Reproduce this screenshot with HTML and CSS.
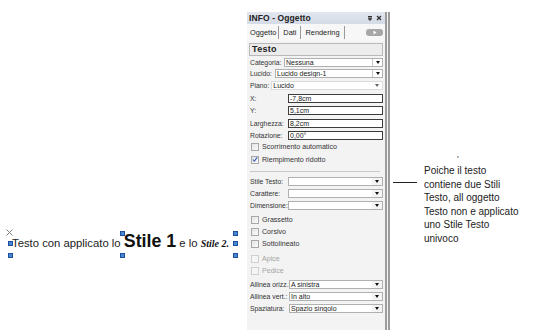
FILE: index.html
```html
<!DOCTYPE html>
<html>
<head>
<meta charset="utf-8">
<link rel="stylesheet" href="styles.css">
</head>
<body>
<div class="stage">
  <div class="left">
    <div class="sel">
      <span class="t-normal">Testo con applicato lo </span><span class="t-big">Stile 1</span><span class="t-normal"> e lo </span><span class="t-serif">Stile 2.</span>
      <svg class="xmark" width="7" height="7" viewBox="0 0 7 7"><path d="M0.5 0.5L6.5 6.5M6.5 0.5L0.5 6.5" stroke="#808080" stroke-width="1"/></svg>
      <span class="h h-lm"></span><span class="h h-lb"></span>
      <span class="h h-mt"></span><span class="h h-mb"></span>
      <span class="h h-rt"></span><span class="h h-rm"></span><span class="h h-rb"></span>
    </div>
  </div>

  <div class="panel">
    <div class="titlebar">
      <span class="title">INFO - Oggetto</span>
      <span class="tb-icons">
        <svg width="6" height="6" viewBox="0 0 6 6"><path d="M1 1.5h4M2 1.5v2.5h2V1.5M1 4h4M3 4v2" stroke="#333" stroke-width="1" fill="none"/></svg>
        <svg width="6" height="6" viewBox="0 0 6 6"><path d="M1 1L5 5M5 1L1 5" stroke="#333" stroke-width="1.3"/></svg>
      </span>
    </div>
    <div class="tabs">
      <span class="tab active">Oggetto</span>
      <span class="tab">Dati</span>
      <span class="tab">Rendering</span>
      <span class="tab-more"><svg width="4" height="5" viewBox="0 0 4 5"><path d="M0.5 0.5L3.5 2.5L0.5 4.5Z" fill="#fff"/></svg></span>
    </div>
    <div class="content">
      <div class="header">Testo</div>

      <div class="row mt2"><span class="lbl w-cat">Categoria:</span><span class="dd sep"><span class="val">Nessuna</span><span class="arr"></span></span></div>
      <div class="row mt2"><span class="lbl w-luc">Lucido:</span><span class="dd sep"><span class="val">Lucido design-1</span><span class="arr"></span></span></div>
      <div class="row mt3"><span class="lbl w-pia">Piano:</span><span class="dd flat"><span class="val">Lucido</span><span class="arr light"></span></span></div>

      <div class="row mt4"><span class="lbl w-38">X:</span><span class="inp">-7,8cm</span></div>
      <div class="row mt3"><span class="lbl w-38">Y:</span><span class="inp">5,1cm</span></div>
      <div class="row mt4"><span class="lbl w-38">Larghezza:</span><span class="inp">8,2cm</span></div>
      <div class="row mt3"><span class="lbl w-38">Rotazione:</span><span class="inp">0,00°</span></div>

      <div class="row mt2"><span class="cb"></span><span class="cblbl">Scorrimento automatico</span></div>
      <div class="row mt4"><span class="cb checked"><svg width="7" height="7" viewBox="0 0 7 7"><path d="M1 3.5L2.8 5.5L6 1" stroke="#3a5fb0" stroke-width="1.3" fill="none"/></svg></span><span class="cblbl">Riempimento ridotto</span></div>

      <div class="sepline"></div>

      <div class="row mt5"><span class="lbl w-38">Stile Testo:</span><span class="dd"><span class="val"></span><span class="arr"></span></span></div>
      <div class="row mt3"><span class="lbl w-38">Carattere:</span><span class="dd"><span class="val"></span><span class="arr"></span></span></div>
      <div class="row mt3"><span class="lbl w-38">Dimensione:</span><span class="dd"><span class="val"></span><span class="arr"></span></span></div>

      <div class="row mt5"><span class="cb"></span><span class="cblbl">Grassetto</span></div>
      <div class="row mt3"><span class="cb"></span><span class="cblbl">Corsivo</span></div>
      <div class="row mt3"><span class="cb"></span><span class="cblbl">Sottolineato</span></div>
      <div class="row mt6 disabled"><span class="cb"></span><span class="cblbl">Apice</span></div>
      <div class="row mt3 disabled"><span class="cb"></span><span class="cblbl">Pedice</span></div>

      <div class="row mt5"><span class="lbl w-39">Allinea orizz.:</span><span class="dd"><span class="val">A sinistra</span><span class="arr"></span></span></div>
      <div class="row mt3"><span class="lbl w-39">Allinea vert.:</span><span class="dd"><span class="val">In alto</span><span class="arr"></span></span></div>
      <div class="row mt3"><span class="lbl w-39">Spaziatura:</span><span class="dd"><span class="val">Spazio singolo</span><span class="arr"></span></span></div>
    </div>
  </div>

  <div class="anno">
    <div class="dot">'</div>
    <div class="anno-body">
      <div class="leader"></div>
      <div class="anno-text">Poiche il testo<br>contiene due Stili<br>Testo, all oggetto<br>Testo non e applicato<br>uno Stile Testo<br>univoco</div>
    </div>
  </div>
</div>
</body>
</html>
```

FILE: styles.css
```css
* { box-sizing: border-box; }
html, body { margin: 0; padding: 0; }
body {
  width: 537px;
  height: 330px;
  overflow: hidden;
  background: #fff;
  font-family: "Liberation Sans", Arial, sans-serif;
  color: #222;
}
.stage { display: flex; height: 330px; }

/* left text with selection handles */
.left { width: 247px; padding-top: 233px; padding-left: 12px; }
.sel { position: relative; display: inline-block; white-space: nowrap; line-height: 17px; }
.t-normal { font-size: 11.3px; color: #222; }
.t-big { font-size: 17.8px; font-weight: bold; color: #111; }
.t-serif { font-family: "Liberation Serif", "Times New Roman", serif; font-weight: bold; font-style: italic; font-size: 10px; color: #111; }
.xmark { position: absolute; left: -6px; top: -4px; display: block; }
.h { position: absolute; width: 5px; height: 5px; background: #4a86d6; border: 1px solid #1e4f9a; }
.h-lm { left: -4px; top: 8px; }
.h-lb { left: -4px; top: 20px; }
.h-mt { left: 108px; top: -2px; }
.h-mb { left: 108px; top: 20px; }
.h-rt { left: 221px; top: -2px; }
.h-rm { left: 221px; top: 8px; }
.h-rb { left: 221px; top: 20px; }

/* panel */
.panel {
  width: 143px;
  margin-top: 12px;
  background: #f3f3f3;
  border-right: 5px double #9c9c9c;
  display: flex;
  flex-direction: column;
}
.titlebar {
  height: 12px;
  background: linear-gradient(#e1e6ef, #d5dbe6);
  display: flex;
  align-items: center;
  justify-content: space-between;
  padding: 0 3px 0 2px;
}
.title { font-size: 8.5px; font-weight: bold; color: #222; letter-spacing: 0.1px; }
.tb-icons { display: flex; gap: 3px; align-items: center; }
.tb-icons svg { display: block; }

.tabs {
  height: 17px;
  display: flex;
  align-items: center;
  padding: 0 2px 0 2px;
  background: #f7f7f7;
}
.tab {
  font-size: 7.4px;
  color: #222;
  height: 13px;
  line-height: 13px;
  padding: 0 4px;
  border-right: 1px solid #9a9a9a;
}
.tab.active { padding-left: 1px; padding-right: 2px; }
.tab-more {
  margin-left: auto;
  width: 17px;
  height: 7px;
  border-radius: 3px;
  background: #a7a7a7;
  display: flex;
  align-items: center;
  justify-content: center;
}
.tab-more svg { display: block; }

.content { padding: 2px 2px 0 3px; display: flex; flex-direction: column; }
.header {
  height: 13px;
  margin-left: -1px;
  border: 1px solid #b9b9b9;
  background: #ececec;
  font-size: 9px;
  font-weight: bold;
  line-height: 11px;
  padding-left: 2px;
  letter-spacing: 0.3px;
  color: #222;
}

.row { display: flex; align-items: center; height: 9px; }
.mt2 { margin-top: 2px; }
.mt3 { margin-top: 3px; }
.mt4 { margin-top: 4px; }
.mt5 { margin-top: 5px; }
.mt6 { margin-top: 6px; }

.lbl { font-size: 6.8px; color: #333; white-space: nowrap; flex: none; }
.w-cat { width: 34px; }
.w-luc { width: 25px; }
.w-pia { width: auto; margin-right: 2px; }
.w-38 { width: 38px; }
.w-39 { width: 39px; }

.dd {
  flex: 1;
  height: 9px;
  border: 1px solid #b0b0b0;
  background: #fff;
  display: flex;
  align-items: stretch;
}
.dd.flat { border-color: #dcdcdc; }
.val { flex: 1; font-size: 7px; line-height: 7px; padding-left: 1px; color: #222; white-space: nowrap; overflow: hidden; }
.arr {
  width: 10px;
  flex: none;
  position: relative;
  background: #f4f4f4;
}
.dd.sep .arr { border-left: 1px solid #c6c6c6; background: #fff; }
.arr::after {
  content: "";
  position: absolute;
  left: 3px;
  top: 2px;
  border-top: 3px solid #111;
  border-left: 2.5px solid transparent;
  border-right: 2.5px solid transparent;
}
.arr.light { background: #fff; }
.arr.light::after { border-top-color: #666; }

.inp {
  flex: 1;
  height: 9px;
  border: 1px solid #3c3c3c;
  background: #fff;
  font-size: 7px;
  line-height: 7px;
  padding-left: 1px;
  color: #222;
}

.cb {
  width: 8px;
  height: 8px;
  margin-left: 1px;
  border: 1px solid #a8a8a8;
  background: linear-gradient(135deg, #e4e4e4, #fbfbfb);
  flex: none;
  display: flex;
  align-items: center;
  justify-content: center;
}
.cb svg { display: block; }
.cblbl { font-size: 7.1px; color: #333; margin-left: 3px; white-space: nowrap; }
.disabled .cb { border-color: #cfcfcf; background: #f5f5f5; }
.disabled .cblbl { color: #a5a5a5; }

.sepline { height: 1px; margin-top: 7px; background: #c9c9c9; margin-right: 3px; }

/* annotation */
.anno { flex: 1; display: flex; flex-direction: column; padding-top: 156px; }
.dot { font-size: 9px; line-height: 6px; height: 6px; margin-left: 67px; color: #333; }
.anno-body { display: flex; align-items: flex-start; margin-top: 2px; }
.leader { width: 24px; height: 1px; background: #222; margin-left: 3px; margin-top: 18px; flex: none; }
.anno-text {
  margin-left: 7px;
  font-size: 10px;
  line-height: 13.6px;
  color: #222;
}
```
